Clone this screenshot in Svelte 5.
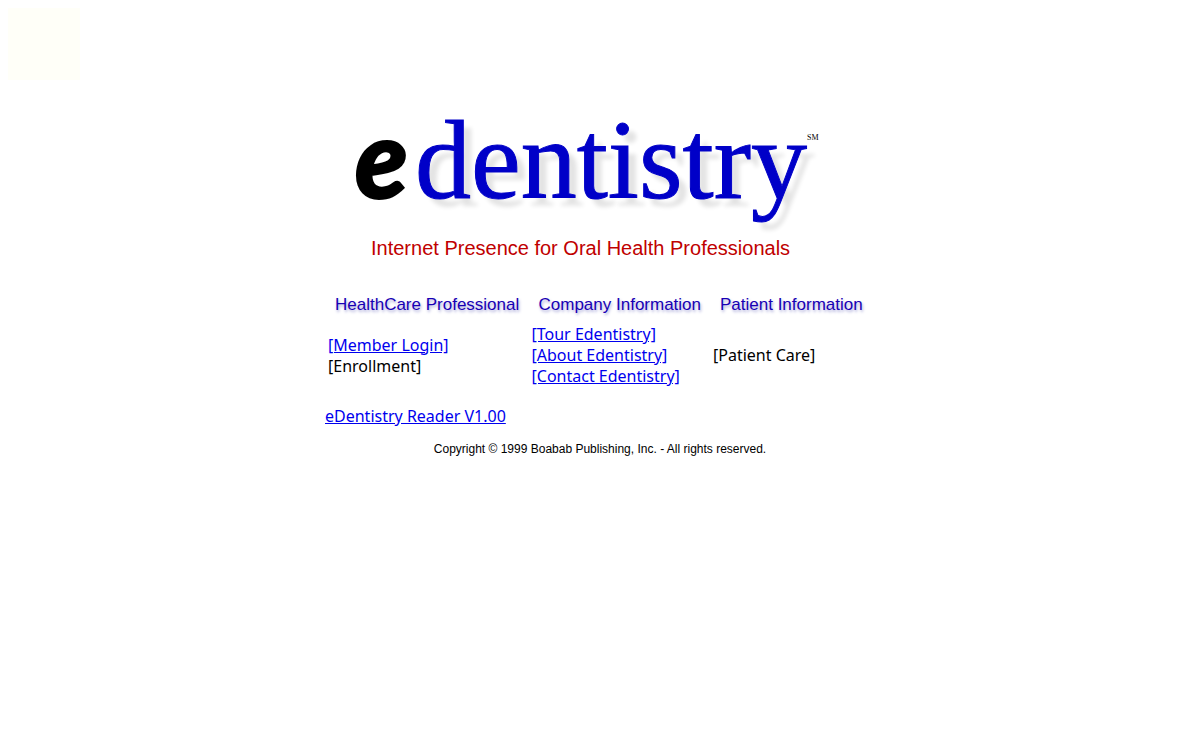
<script lang="ts">
	type Entry = { label: string; href?: string };

	const columns: { title: string; entries: Entry[] }[] = [
		{
			title: 'HealthCare Professional',
			entries: [{ label: 'Member Login', href: '#login' }, { label: 'Enrollment' }]
		},
		{
			title: 'Company Information',
			entries: [
				{ label: 'Tour Edentistry', href: '#tour' },
				{ label: 'About Edentistry', href: '#about' },
				{ label: 'Contact Edentistry', href: '#contact' }
			]
		},
		{
			title: 'Patient Information',
			entries: [{ label: 'Patient Care' }]
		}
	];
</script>

<div class="page">
	<div class="swatch"></div>

	<main>
		<header>
			<h1><span class="initial">e</span><span class="name">dentistry</span><sup>SM</sup></h1>
			<p class="tagline">Internet Presence for Oral Health Professionals</p>
		</header>

		<table>
			<thead>
				<tr>
					{#each columns as column}
						<th scope="col">{column.title}</th>
					{/each}
				</tr>
			</thead>
			<tbody>
				<tr>
					{#each columns as column}
						<td>
							{#each column.entries as entry}
								<div>
									{#if entry.href}
										<a href={entry.href}>[{entry.label}]</a>
									{:else}
										[{entry.label}]
									{/if}
								</div>
							{/each}
						</td>
					{/each}
				</tr>
			</tbody>
		</table>

		<p class="reader"><a href="#reader">eDentistry Reader V1.00</a></p>
		<p class="copyright">Copyright © 1999 Boabab Publishing, Inc. - All rights reserved.</p>
	</main>
</div>

<style>
	:global(body) {
		margin: 0;
		background: #fff;
	}

	.page {
		padding: 8px;
		color: #000;
		font-family: 'Noto Sans', 'Open Sans', sans-serif;
		font-size: 16px;
		line-height: 21px;
	}

	.swatch {
		width: 72px;
		height: 72px;
		background: #fffff8;
	}

	main {
		max-width: 550px;
		margin: 20px auto 0;
	}

	h1 {
		display: flex;
		align-items: baseline;
		height: 132px;
		margin: 0 0 0 30px;
		font-weight: normal;
		line-height: 112px;
		white-space: nowrap;
	}

	.initial {
		font-family: Lato, 'Open Sans', sans-serif;
		font-size: 108px;
		font-style: italic;
		font-weight: 900;
		-webkit-text-stroke: 2px #000;
	}

	.name {
		margin-left: 7px;
		color: #0000c8;
		font-family: 'Palatino Linotype', Palatino, 'Liberation Serif', serif;
		font-size: 112px;
		text-shadow: 8px 8px 4px #e4e4e4;
		-webkit-text-stroke: 1px #0000c8;
	}

	sup {
		align-self: flex-start;
		font-family: 'Liberation Serif', serif;
		font-size: 8px;
		line-height: 76px;
	}

	.tagline {
		margin: 4px 0 0 46px;
		color: #c00000;
		font-family: 'Liberation Sans', Arial, sans-serif;
		font-size: 20px;
		line-height: 24px;
	}

	table {
		width: 100%;
		margin-top: 33px;
		border-collapse: collapse;
		table-layout: fixed;
	}

	th {
		padding: 0 0 0 10px;
		color: #1800b4;
		font-family: 'Liberation Sans', Arial, sans-serif;
		font-size: 17px;
		font-weight: normal;
		line-height: 24px;
		text-align: left;
		text-shadow: 1px 2px 3px #a8a8d8;
		white-space: nowrap;
	}

	th:first-child {
		width: 37%;
		box-sizing: border-box;
	}

	th:nth-child(2) {
		width: 33%;
		box-sizing: border-box;
	}

	td {
		padding: 7px 3px;
		vertical-align: middle;
	}

	a {
		color: #0000ee;
	}

	.reader {
		margin: 12px 0 0;
	}

	.copyright {
		margin: 12px 0 0;
		font-family: 'Liberation Sans', Arial, sans-serif;
		font-size: 12px;
		text-align: center;
	}
</style>
